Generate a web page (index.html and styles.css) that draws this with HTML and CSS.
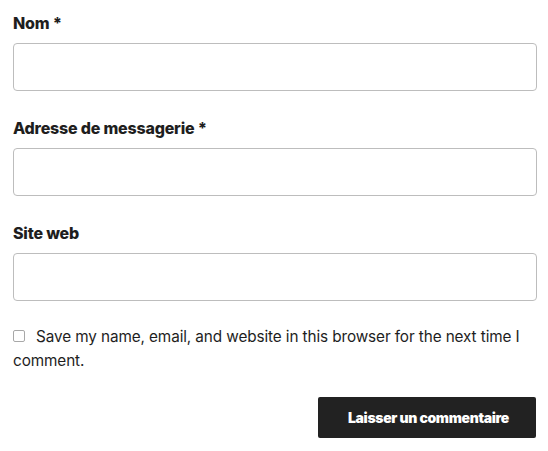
FILE: index.html
```html
<!DOCTYPE html>
<html lang="fr">
<head>
    <meta charset="UTF-8">
    <meta name="viewport" content="width=device-width, initial-scale=1.0">
    <title>Laisser un commentaire</title>
    <link rel="stylesheet" href="styles.css">
</head>
<body>

<form class="comment-form" onsubmit="return false">
    <p class="field">
        <label for="author">Nom *</label>
        <input type="text" id="author" name="author" required>
    </p>
    <p class="field">
        <label for="email">Adresse de messagerie *</label>
        <input type="email" id="email" name="email" required>
    </p>
    <p class="field">
        <label for="url">Site web</label>
        <input type="url" id="url" name="url">
    </p>
    <p class="cookies">
        <input type="checkbox" id="cookies" name="cookies"><label for="cookies">Save my name, email, and website in this browser for the next time I comment.</label>
    </p>
    <p class="submit">
        <button type="submit">Laisser un commentaire</button>
    </p>
</form>

</body>
</html>
```

FILE: styles.css
```css
* {
    margin: 0;
    padding: 0;
    box-sizing: border-box;
}

body {
    font-family: 'Inter', 'Liberation Sans', sans-serif;
    font-size: 16px;
    line-height: 24px;
    color: #1e1e1e;
    background: #fff;
    padding: 11px 11px 0 13px;
}

.field {
    margin-bottom: 25px;
}

.field label {
    display: block;
    font-weight: 800;
    letter-spacing: -0.2px;
    margin-bottom: 8px;
}

.field input {
    display: block;
    width: 100%;
    height: 48px;
    border: 1px solid #bdbdbd;
    border-radius: 4px;
    background: #fff;
    font-size: 16px;
    padding: 0 12px;
    outline: none;
}

.cookies {
    margin-top: -1px;
    font-size: 15.3px;
    letter-spacing: -0.1px;
}

.cookies input {
    -webkit-appearance: none;
    appearance: none;
    width: 12px;
    height: 12px;
    border: 1px solid #a8a8a8;
    border-radius: 2px;
    background: #fff;
    vertical-align: middle;
    margin: -3px 11px 0 0;
}

.submit {
    display: flex;
    justify-content: flex-end;
    margin-top: 24px;
    padding-right: 1px;
}

.submit button {
    background: #222;
    color: #fff;
    border: none;
    border-radius: 2px;
    font-family: 'Inter', 'Liberation Sans', sans-serif;
    font-size: 14px;
    font-weight: 900;
    letter-spacing: -0.35px;
    line-height: 19px;
    padding: 11px 27px 11px 30px;
    cursor: pointer;
}
```
